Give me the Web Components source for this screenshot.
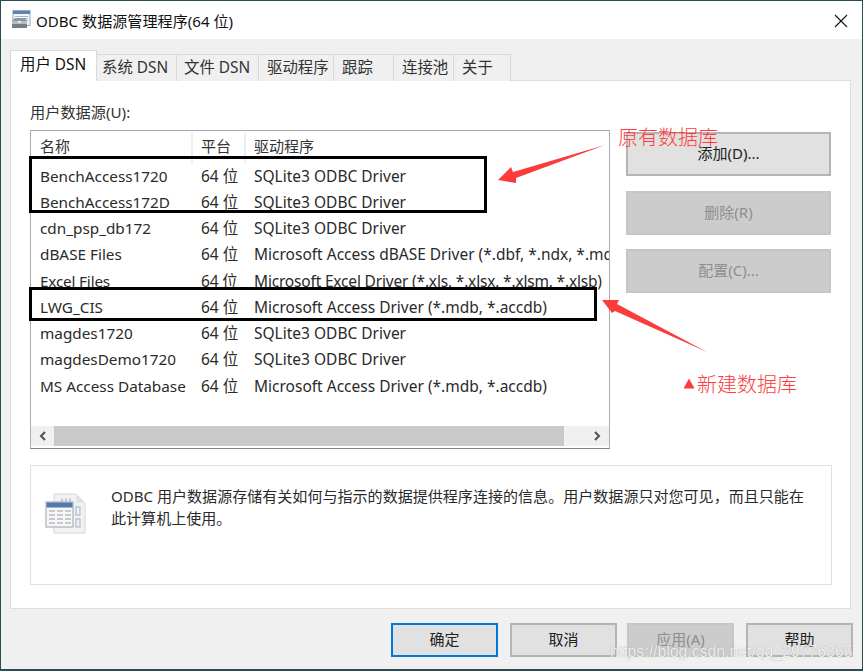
<!DOCTYPE html>
<html lang="zh">
<head>
<meta charset="utf-8">
<title>ODBC</title>
<style>
  html, body { margin: 0; height: 671px; overflow: hidden; background: #2c4c52; }
  body { font: 15px "Noto Sans", "Noto Sans CJK SC", sans-serif; color: #222; }
</style>
</head>
<body>

<odbc-window>
  <odbc-titlebar slot="title">ODBC 数据源管理程序(64 位)</odbc-titlebar>

  <odbc-tab slot="tabs" selected style="width:87px">用户 DSN</odbc-tab>
  <odbc-tab slot="tabs" style="width:80px;--pad:5px">系统 DSN</odbc-tab>
  <odbc-tab slot="tabs" style="width:82px;--pad:7px">文件 DSN</odbc-tab>
  <odbc-tab slot="tabs" style="width:75px;--pad:8px">驱动程序</odbc-tab>
  <odbc-tab slot="tabs" style="width:60px;--pad:8px">跟踪</odbc-tab>
  <odbc-tab slot="tabs" style="width:60px;--pad:8px">连接池</odbc-tab>
  <odbc-tab slot="tabs" style="width:57px;--pad:8px">关于</odbc-tab>

  <odbc-pane slot="pane">
    <span slot="label">用户数据源(U):</span>

    <dsn-list slot="list">
      <dsn-row name="BenchAccess1720" driver="SQLite3 ODBC Driver"></dsn-row>
      <dsn-row name="BenchAccess172D" driver="SQLite3 ODBC Driver"></dsn-row>
      <dsn-row name="cdn_psp_db172" driver="SQLite3 ODBC Driver"></dsn-row>
      <dsn-row name="dBASE Files" driver="Microsoft Access dBASE Driver (*.dbf, *.ndx, *.mdx)"></dsn-row>
      <dsn-row name="Excel Files" driver="Microsoft Excel Driver (*.xls, *.xlsx, *.xlsm, *.xlsb)" style="letter-spacing:-.18px"></dsn-row>
      <dsn-row name="LWG_CIS" driver="Microsoft Access Driver (*.mdb, *.accdb)"></dsn-row>
      <dsn-row name="magdes1720" driver="SQLite3 ODBC Driver"></dsn-row>
      <dsn-row name="magdesDemo1720" driver="SQLite3 ODBC Driver"></dsn-row>
      <dsn-row name="MS Access Database" driver="Microsoft Access Driver (*.mdb, *.accdb)"></dsn-row>
    </dsn-list>

    <odbc-button slot="actions" class="side">添加(D)...</odbc-button>
    <odbc-button slot="actions" class="side" disabled>删除(R)</odbc-button>
    <odbc-button slot="actions" class="side" disabled>配置(C)...</odbc-button>

    <odbc-info slot="info">ODBC 用户数据源存储有关如何与指示的数据提供程序连接的信息。用户数据源只对您可见，而且只能在此计算机上使用。</odbc-info>
  </odbc-pane>

  <odbc-button slot="footer" default style="width:107px;height:34px">确定</odbc-button>
  <odbc-button slot="footer" style="width:107px;height:34px;margin-left:12px">取消</odbc-button>
  <odbc-button slot="footer" disabled style="width:107px;height:34px;margin-left:10px">应用(A)</odbc-button>
  <odbc-button slot="footer" style="width:107px;height:34px;margin-left:12px">帮助</odbc-button>

  <odbc-notes slot="notes"></odbc-notes>
</odbc-window>

<script>
class OdbcWindow extends HTMLElement {
  constructor() {
    super();
    this.attachShadow({ mode: 'open' });
    this.shadowRoot.innerHTML = `
      <style>
        :host { display: block; position: relative; margin: 1px 1px 2px 1px; height: 668px; background: #f0f0f0; }
        .client { padding: 11px 11px 0 9px; }
        .tabs { display: flex; height: 31px; position: relative; z-index: 1; margin-bottom: -1px; }
        .footer { display: flex; justify-content: flex-end; margin: 14px -2px 0 0; }
      </style>
      <slot name="title"></slot>
      <div class="client">
        <div class="tabs"><slot name="tabs"></slot></div>
        <slot name="pane"></slot>
        <div class="footer"><slot name="footer"></slot></div>
      </div>
      <slot name="notes"></slot>
    `;
  }
}

class OdbcTitlebar extends HTMLElement {
  constructor() {
    super();
    this.attachShadow({ mode: 'open' });
    this.shadowRoot.innerHTML = `
      <style>
        :host { display: flex; align-items: center; height: 38px; background: #fff; color: #111; font-size: 15.1px; }
        .icon { width: 20px; height: 20px; margin: 0 5px 0 10px; flex: none; }
        .text { flex: 1; margin-top: -1px; }
        .close { width: 14px; height: 14px; margin: 1px 14px 0 0; flex: none; }
      </style>
      <svg class="icon" viewBox="0 0 20 20">
        <rect x="2" y="0.5" width="17" height="15" fill="#f4f6f8" stroke="#9aa5b1"/>
        <rect x="2" y="1" width="17" height="3" fill="#5b83b8"/>
        <path d="M4 6.5h13M4 8.5h13M4 10.5h13" stroke="#aeb6c0"/>
        <path d="M1 11l3-3h10l2 3v7H1z" fill="#8d979e"/>
        <path d="M1 11h15v3H1z" fill="#b5bdc2"/>
        <path d="M1 14h15v4H1z" fill="#747f87"/>
        <rect x="7" y="11" width="3" height="2" fill="#e6eaec"/>
      </svg>
      <span class="text"><slot></slot></span>
      <svg class="close" viewBox="0 0 14 14"><path d="M1 1l12 12M13 1L1 13" stroke="#111" stroke-width="1.1"/></svg>
    `;
  }
}

class OdbcTab extends HTMLElement {
  constructor() {
    super();
    this.attachShadow({ mode: 'open' });
    this.shadowRoot.innerHTML = `
      <style>
        :host { display: block; box-sizing: border-box; height: 27px; margin-top: 4px; padding: 2px 0 0 var(--pad, 5px);
                background: #f0f0f0; border: 1px solid #d9d9d9; border-left-width: 0; border-bottom-width: 0;
                color: #333; white-space: nowrap; line-height: 22px; font-size: 15.4px; }
        :host([selected]) { height: 31px; margin-top: 0; padding: 1px 0 0 9px; background: #fff; color: #111;
                border-left-width: 1px; line-height: 25px; }
      </style>
      <slot></slot>
    `;
  }
}

class OdbcPane extends HTMLElement {
  constructor() {
    super();
    this.attachShadow({ mode: 'open' });
    this.shadowRoot.innerHTML = `
      <style>
        :host { display: block; box-sizing: border-box; height: 529px; padding: 22px 18px 0 19px;
                background: #fff; border: 1px solid #dedede; }
        .label { height: 18px; line-height: 18px; margin-bottom: 9px; color: #333; font-size: 15.2px; }
        .top { display: flex; gap: 16px; }
        .actions { display: flex; flex-direction: column; gap: 14.5px; margin-top: 2px; width: 205px; }
        .info { margin-top: 16px; }
      </style>
      <div class="label"><slot name="label"></slot></div>
      <div class="top">
        <slot name="list"></slot>
        <div class="actions"><slot name="actions"></slot></div>
      </div>
      <div class="info"><slot name="info"></slot></div>
    `;
  }
}

class DsnList extends HTMLElement {
  constructor() {
    super();
    this.attachShadow({ mode: 'open' });
    this.shadowRoot.innerHTML = `
      <style>
        :host { display: block; box-sizing: border-box; width: 580px; height: 319px; flex: none;
                border: 1px solid #a9adb3; border-bottom-color: #82878d; background: #fff; position: relative; overflow: hidden; }
        .head { display: grid; grid-template-columns: 162px 53px 1fr; height: 30px; margin: 2px 0 -0.5px; color: #333; }
        .head span { padding-left: 8px; line-height: 27px; border-right: 2px solid #eeeeee; box-sizing: border-box; }
        .head span:first-child { padding-left: 9px; }
        .head span:last-child { border: 0; }
        .rows { height: 263px; overflow: hidden; }
        .bar { display: flex; height: 20px; background: #f0f0f0; position: absolute; left: 0; right: 0; bottom: 2px; }
        .arrow { width: 23px; display: flex; align-items: center; justify-content: center; }
        .thumb { width: 510px; background: #c9c9c9; }
        .track { flex: 1; }
        svg { width: 10px; height: 10px; }
      </style>
      <div class="head"><span>名称</span><span>平台</span><span>驱动程序</span></div>
      <div class="rows"><slot></slot></div>
      <div class="bar">
        <div class="arrow"><svg viewBox="0 0 10 10"><path d="M7 1L3 5l4 4" fill="none" stroke="#505050" stroke-width="2"/></svg></div>
        <div class="thumb"></div>
        <div class="track"></div>
        <div class="arrow" style="width:24px"><svg viewBox="0 0 10 10"><path d="M3 1l4 4-4 4" fill="none" stroke="#505050" stroke-width="2"/></svg></div>
      </div>
    `;
  }
}

class DsnRow extends HTMLElement {
  constructor() {
    super();
    this.attachShadow({ mode: 'open' });
    this.shadowRoot.innerHTML = `
      <style>
        :host { display: grid; grid-template-columns: 162px 53px 1fr; height: 26.25px; line-height: 26px; color: #2a2a2a; white-space: nowrap; font-size: 15.5px; }
        span { padding-left: 8px; overflow: hidden; }
        span.name { padding-left: 9px; font-size: 15.3px; }
      </style>
      <span class="name">${this.getAttribute('name')}</span>
      <span>64 位</span>
      <span>${this.getAttribute('driver')}</span>
    `;
  }
}

class OdbcButton extends HTMLElement {
  constructor() {
    super();
    this.attachShadow({ mode: 'open' });
    this.shadowRoot.innerHTML = `
      <style>
        :host { display: flex; box-sizing: border-box; height: 44px; padding-bottom: 3px; align-items: center; justify-content: center;
                background: #e1e1e1; border: 2px solid #b4b4b4; color: #222; }
        :host([disabled]) { background: #cccccc; border-color: #c6c6c6; color: #8e8e8e; }
        :host([default]) { border-color: #0078d7; }
      </style>
      <slot></slot>
    `;
  }
}

class OdbcInfo extends HTMLElement {
  constructor() {
    super();
    this.attachShadow({ mode: 'open' });
    this.shadowRoot.innerHTML = `
      <style>
        :host { display: flex; box-sizing: border-box; width: 802px; height: 120px; border: 1px solid #e0e0e0; background: #fff; }
        svg { width: 42px; height: 42px; margin: 27px 0 0 14px; flex: none; }
        .text { width: 700px; margin: 20px 0 0 24px; line-height: 21.5px; color: #2a2a2a; font-size: 15.06px; }
      </style>
      <svg viewBox="0 0 42 42">
        <path d="M9 1h22l9 9v30H9z" fill="#f1f2f4" stroke="#d4d6da"/>
        <path d="M31 1v9h9z" fill="#dfe2e6"/>
        <path d="M16 7h12" stroke="#c4c7cc" stroke-width="3" stroke-dasharray="2 2"/>
        <path d="M31 14v8h4v-8zM31 26v8h4v-8z" fill="none" stroke="#bcc4d0" stroke-width="1.4"/>
        <rect x="1" y="9" width="27" height="25" fill="#f7f7f8" stroke="#9ea2a8"/>
        <rect x="1.5" y="9.5" width="26" height="5" fill="#4f78ae"/>
        <path d="M4 18h6M12 18h6M20 18h6M4 22h6M12 22h6M20 22h6M4 26h6M12 26h6M20 26h6M4 30h6M12 30h6M20 30h6" stroke="#b9bcc1" stroke-width="1.5"/>
      </svg>
      <div class="text"><slot></slot></div>
    `;
  }
}

// everything drawn over the dialog: boxes, arrows, notes, watermark
class OdbcNotes extends HTMLElement {
  constructor() {
    super();
    this.attachShadow({ mode: 'open' });
    this.shadowRoot.innerHTML = `
      <style>
        :host { position: absolute; left: -1px; top: -1px; width: 863px; height: 671px; pointer-events: none; }
        svg { position: absolute; left: 0; top: 0; width: 863px; height: 671px; }
        .box { position: absolute; box-sizing: border-box; border: 3px solid #000; }
        .note { position: absolute; color: #fc3c3c; font-size: 20px; line-height: 26px; white-space: nowrap; font-family: "Noto Sans CJK SC", sans-serif; font-weight: 300; }
        .mark { position: absolute; left: 610px; top: 642px; font: 15.8px/20px "Liberation Sans", sans-serif; color: rgba(255,255,255,.85); white-space: nowrap;
                text-shadow: 0 0 1px rgba(120,120,120,.7); }
      </style>
      <div class="box" style="left:29px;top:156px;width:458px;height:57px"></div>
      <div class="box" style="left:29px;top:287px;width:568px;height:34px"></div>
      <svg viewBox="0 0 863 671">
        <path d="M498 180L511 167L513 172L605 145L516 178L516 183z" fill="#fc3c3c"/>
        <path d="M602 300L619 300L617 304L707 352L615 311L612 313z" fill="#fc3c3c"/>
        <path d="M689 378.500L694.500 388.500H683.500z" fill="#fc3c3c"/>
      </svg>
      <div class="note" style="left:618px;top:124px">原有数据库</div>
      <div class="note" style="left:697px;top:371px">新建数据库</div>
      <div class="mark">https://blog.csdn.net/qq_29776365</div>
    `;
  }
}

customElements.define('odbc-window', OdbcWindow);
customElements.define('odbc-titlebar', OdbcTitlebar);
customElements.define('odbc-tab', OdbcTab);
customElements.define('odbc-pane', OdbcPane);
customElements.define('dsn-list', DsnList);
customElements.define('dsn-row', DsnRow);
customElements.define('odbc-button', OdbcButton);
customElements.define('odbc-info', OdbcInfo);
customElements.define('odbc-notes', OdbcNotes);
</script>
</body>
</html>
